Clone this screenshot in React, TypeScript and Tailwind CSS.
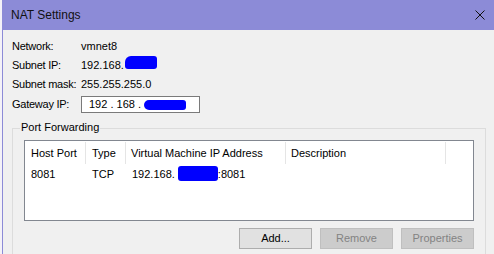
import React from "react";

// NAT Settings dialog (VMware virtual network editor)
function Blob({ className }: { className: string }) {
  return <span className={`inline-block bg-[#0000ff] rounded-[3px] ${className}`} />;
}

export default function App() {
  const fields = [
    { label: "Network:", value: <span>vmnet8</span> },
    {
      label: "Subnet IP:",
      value: (
        <>
          <span>192.168.</span>
          <Blob className="w-[32px] h-[13px] mt-[-6px] ml-[1px] rounded-tl-[6px]" />
        </>
      ),
    },
    { label: "Subnet mask:", value: <span>255.255.255.0</span> },
  ];

  const cols = [
    { name: "Host Port", w: "w-[61px]", pl: "pl-[6px]" },
    { name: "Type", w: "w-[40px]", pl: "pl-[6px]" },
    { name: "Virtual Machine IP Address", w: "w-[160px]", pl: "pl-[5px]" },
    { name: "Description", w: "w-[160px]", pl: "pl-[5px]" },
  ];

  return (
    <div className="w-[494px] h-[254px] overflow-hidden flex bg-white font-['Liberation_Sans',sans-serif] text-[11px] text-black">
      {/* strip of desktop behind the dialog */}
      <div className="w-[2px] shrink-0 bg-[#f4f2f8]" />

      <div className="flex-1 flex flex-col border-l border-[#8c8bd7] bg-[#f0f0f0]">
        {/* Title bar */}
        <div className="h-[30px] shrink-0 bg-[#8c8bd7] flex items-center justify-between pl-[8px] pr-[9px]">
          <span className="text-[12px] text-[#111]">NAT Settings</span>
          <svg width="10" height="10" viewBox="0 0 10 10" className="mt-[-1px]">
            <path d="M0.5 0.5 L9.5 9.5 M9.5 0.5 L0.5 9.5" stroke="#111" strokeWidth="1" fill="none" />
          </svg>
        </div>

        {/* Body */}
        <div className="flex-1 flex flex-col pl-[9px] pt-[7px]">
          {fields.map((f) => (
            <div key={f.label} className="h-[19px] flex items-center">
              <span className="w-[69px] shrink-0 tracking-[-0.25px]">{f.label}</span>
              <div className="flex items-center">{f.value}</div>
            </div>
          ))}

          <div className="h-[17px] mt-[2px] flex items-center">
            <span className="w-[69px] shrink-0 tracking-[-0.25px]">Gateway IP:</span>
            <div className="w-[119px] h-[17px] border border-[#7a7a7a] bg-white flex items-center pl-[7px]">
              <span className="whitespace-pre">192 . 168 .</span>
              <Blob className="w-[42px] h-[10px] ml-[3px] mt-[1px] rounded-l-[5px]" />
            </div>
          </div>

          {/* Port Forwarding group */}
          <div className="relative mt-[15px] w-[474px] border border-[#dcdcdc] pt-[11px] px-[11px] pb-[10px]">
            <span className="absolute left-[7px] top-[-8px] px-px bg-[#f0f0f0] leading-[13px]">Port Forwarding</span>

            <div className="h-[81px] border border-[#828790] bg-white flex flex-col">
              <div className="h-[24px] flex">
                {cols.map((c) => (
                  <div key={c.name} className={`${c.w} ${c.pl} shrink-0 flex items-center border-r border-[#e5e5e5] my-[1px]`}>
                    {c.name}
                  </div>
                ))}
              </div>
              <div className="h-[18px] flex items-center">
                <span className="w-[61px] pl-[6px] shrink-0">8081</span>
                <span className="w-[40px] pl-[6px] shrink-0">TCP</span>
                <span className="pl-[6px] flex items-center">
                  <span>192.168.</span>
                  <Blob className="w-[40px] h-[15px] ml-[3px] mt-[-1px] rounded-[2px]" />
                  <span>:8081</span>
                </span>
              </div>
            </div>

            <div className="mt-[7px] flex justify-end gap-[8px]">
              <button className="w-[73px] h-[21px] border border-[#adadad] bg-[#e1e1e1] text-black">Add...</button>
              <button className="w-[73px] h-[21px] border border-[#bfbfbf] bg-[#cccccc] text-[#838383]" disabled>
                Remove
              </button>
              <button className="w-[73px] h-[21px] border border-[#bfbfbf] bg-[#cccccc] text-[#838383]" disabled>
                Properties
              </button>
            </div>
          </div>
        </div>
      </div>
    </div>
  );
}
